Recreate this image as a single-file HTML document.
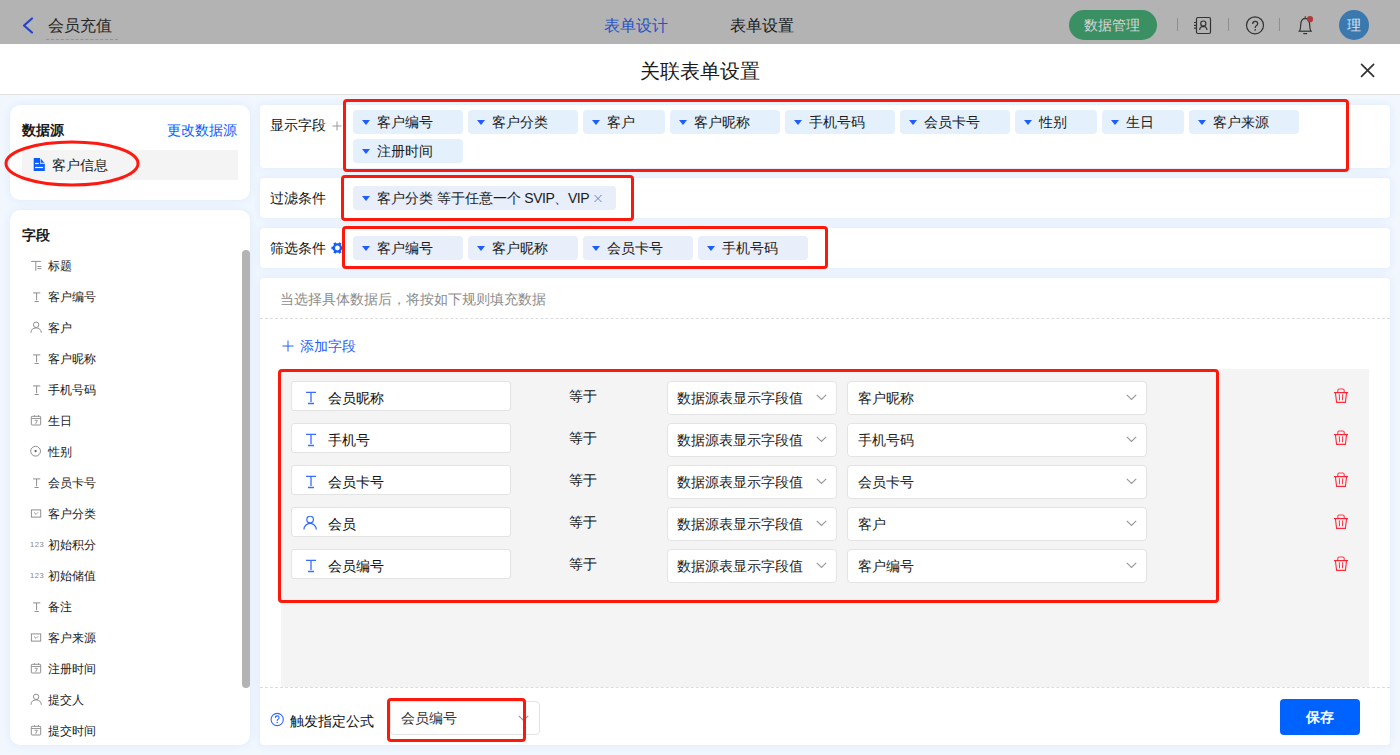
<!DOCTYPE html>
<html><head><meta charset="utf-8">
<style>
*{box-sizing:border-box;margin:0;padding:0}
html,body{width:1400px;height:755px;overflow:hidden}
body{position:relative;background:#f2f7fe;font-family:"Liberation Sans",sans-serif;color:#262626;font-size:14px}
.a{position:absolute}
.t14{position:absolute;font-size:14px;line-height:20px;white-space:nowrap}
.t12{position:absolute;font-size:12px;line-height:20px;white-space:nowrap}
.t16{position:absolute;font-size:16px;line-height:20px;white-space:nowrap}
.card{position:absolute;background:#fff;border-radius:4px;box-shadow:0 0 8px rgba(185,215,250,0.4)}
.redr{position:absolute;border:3px solid #fd180c;border-radius:4px}
.tag{position:absolute;height:24px;border-radius:4px;background:#e4f1fd}
.tag2{background:#e8eefa}
.tag .tri{position:absolute;left:9px;top:10px;width:0;height:0;border-left:4px solid transparent;border-right:4px solid transparent;border-top:5px solid #1d5cff}
.tag span{position:absolute;left:24px;top:1.5px;font-size:14px;line-height:20px;white-space:nowrap;color:#1a1a1a}
.inp{position:absolute;background:#fff;border:1px solid #e3e3e3;border-radius:3px}
.sel{position:absolute;background:#fff;border:1px solid #e3e3e3;border-radius:4px}
</style></head><body>
<!-- top header (dimmed) -->
<div class="a" style="left:0;top:0;width:1400px;height:44px;background:#b3b3b3"></div>
<svg class="a" style="left:20px;top:15px" width="16" height="21" viewBox="0 0 16 21"><polyline points="12,3.5 4,10.5 12,17.5" fill="none" stroke="#2145c6" stroke-width="2.2" stroke-linecap="round" stroke-linejoin="round"/></svg>
<div class="t16" style="left:48px;top:16px;color:#262626">会员充值</div>
<div class="a" style="left:46px;top:39px;width:72px;border-top:1px dashed #939393"></div>
<div class="t16" style="left:604px;top:16px;color:#2851c4">表单设计</div>
<div class="t16" style="left:730px;top:16px;color:#1a1a1a">表单设置</div>
<div class="a" style="left:1069px;top:10px;width:88px;height:30px;border-radius:15px;background:#3a8f63"></div>
<div class="t14" style="left:1084px;top:15px;color:#d6d6d6">数据管理</div>
<div class="a" style="left:1177px;top:18px;width:1px;height:13px;background:#8f8f8f"></div>
<div class="a" style="left:1228px;top:18px;width:1px;height:13px;background:#8f8f8f"></div>
<div class="a" style="left:1279px;top:18px;width:1px;height:13px;background:#8f8f8f"></div>
<svg class="a" style="left:1192px;top:15px" width="22" height="21" viewBox="0 0 22 21"><rect x="4.5" y="2.5" width="14" height="16" rx="1.5" fill="none" stroke="#333" stroke-width="1.2"/><circle cx="11.3" cy="8.6" r="2.6" fill="none" stroke="#333" stroke-width="1.2"/><path d="M7.6 15 Q7.9 11.6 11.3 11.4 Q14.7 11.6 15 15" fill="none" stroke="#333" stroke-width="1.2"/><path d="M2 7.5h3M2 10.4h3M2 13.1h3" stroke="#333" stroke-width="1.1"/></svg>
<svg class="a" style="left:1245px;top:16px" width="20" height="20" viewBox="0 0 20 20"><circle cx="10" cy="9.3" r="8.5" fill="none" stroke="#333" stroke-width="1.2"/><path d="M7.7 7.9 Q7.7 5.3 10.2 5.3 Q12.7 5.3 12.7 7.6 Q12.7 9.1 11 10 Q10.2 10.5 10.2 12" fill="none" stroke="#333" stroke-width="1.25"/><circle cx="10.2" cy="13.9" r="0.8" fill="#333"/></svg>
<svg class="a" style="left:1296px;top:15px" width="20" height="21" viewBox="0 0 20 21"><path d="M3.6 16 Q4.6 14.5 4.7 10 Q4.9 3.4 9.2 3.3 Q13.5 3.4 13.7 10 Q13.8 14.5 14.8 16" fill="none" stroke="#333" stroke-width="1.2" stroke-linejoin="round"/><path d="M2.5 16.2h13.4" stroke="#333" stroke-width="1.2"/><path d="M7.3 18.6h3.8" stroke="#333" stroke-width="1.2"/><path d="M9.2 1.2v1.6" stroke="#333" stroke-width="1.1"/><circle cx="14" cy="4.2" r="3.1" fill="#b23a3a"/></svg>
<div class="a" style="left:1339px;top:10px;width:30px;height:30px;border-radius:50%;background:#3a78ad"></div>
<div class="t14" style="left:1347px;top:15px;color:#dde6ef">理</div>

<!-- modal header -->
<div class="a" style="left:0;top:44px;width:1400px;height:50px;background:#fff"></div>
<div class="a" style="left:0;top:94px;width:1400px;height:1px;background:#dedede"></div>
<div class="a" style="left:640px;top:56px;font-size:20px;line-height:30px;color:#1a1a1a;white-space:nowrap">关联表单设置</div>
<svg class="a" style="left:1359px;top:62px" width="17" height="16" viewBox="0 0 17 16"><path d="M2.6 2.3 L14.6 14.3 M14.6 2.3 L2.6 14.3" stroke="#333" stroke-width="1.7" stroke-linecap="round"/></svg>

<!-- left panel card 1 -->
<div class="card" style="left:10px;top:105px;width:240px;height:95px;border-radius:10px"></div>
<div class="t14" style="left:22px;top:120px;font-weight:bold;color:#1a1a1a">数据源</div>
<div class="t14" style="left:167px;top:120px;color:#0a5cff">更改数据源</div>
<div class="a" style="left:22px;top:150px;width:216px;height:30px;background:#f4f4f4"></div>
<svg class="a" style="left:33px;top:157px" width="13" height="15" viewBox="0 0 13 15"><path d="M0.7 1.4 Q0.7 0.9 1.2 0.9 H7 V6.7 H11.8 V13.5 Q11.8 14 11.3 14 H1.2 Q0.7 14 0.7 13.5 Z" fill="#0a5cff"/><path d="M7.6 1.6 L11.4 5.7 H7.6 Z" fill="#0a5cff"/><rect x="2.1" y="5.9" width="3.6" height="1.2" fill="#fff"/><rect x="2.1" y="9.9" width="8.1" height="1.2" fill="#fff"/></svg>
<div class="t14" style="left:52px;top:155px;color:#1a1a1a">客户信息</div>
<svg class="a" style="left:3px;top:139px" width="138" height="49" viewBox="0 0 138 49"><ellipse cx="69" cy="24.5" rx="66" ry="21.5" fill="none" stroke="#fd1a10" stroke-width="3"/></svg>

<!-- left panel card 2 -->
<div class="card" style="left:10px;top:210px;width:240px;height:535px;border-radius:10px"></div>
<div class="t14" style="left:22px;top:225px;font-weight:bold;color:#1a1a1a">字段</div>
<div class="a" style="left:242px;top:250px;width:8px;height:438px;border-radius:4px;background:#b3b3b3"></div>
<div id="fields"></div>
<svg class="a" style="left:30px;top:259px" width="13" height="13" viewBox="0 0 13 13"><path d="M1.2 2.4h9.6M5.8 2.4v9.3M7.4 7.5h4M7.4 9.6h4" stroke="#8f8f8f" stroke-width="1" fill="none"/></svg>
<div class="t12" style="left:48px;top:256.0px;color:#1a1a1a">标题</div>
<svg class="a" style="left:30px;top:290px" width="13" height="13" viewBox="0 0 13 13"><path d="M3 2.9h7.3M6.6 2.9v7.3M4.5 11.5h4.2" stroke="#8f8f8f" stroke-width="1" fill="none"/></svg>
<div class="t12" style="left:48px;top:287.0px;color:#1a1a1a">客户编号</div>
<svg class="a" style="left:30px;top:321px" width="13" height="13" viewBox="0 0 13 13"><circle cx="6.1" cy="3.8" r="2.7" fill="none" stroke="#8f8f8f" stroke-width="1"/><path d="M0.9 11.8 Q1.2 7 6.1 6.9 Q11 7 11.3 11.8" fill="none" stroke="#8f8f8f" stroke-width="1"/></svg>
<div class="t12" style="left:48px;top:318.0px;color:#1a1a1a">客户</div>
<svg class="a" style="left:30px;top:352px" width="13" height="13" viewBox="0 0 13 13"><path d="M3 2.9h7.3M6.6 2.9v7.3M4.5 11.5h4.2" stroke="#8f8f8f" stroke-width="1" fill="none"/></svg>
<div class="t12" style="left:48px;top:349.0px;color:#1a1a1a">客户昵称</div>
<svg class="a" style="left:30px;top:383px" width="13" height="13" viewBox="0 0 13 13"><path d="M3 2.9h7.3M6.6 2.9v7.3M4.5 11.5h4.2" stroke="#8f8f8f" stroke-width="1" fill="none"/></svg>
<div class="t12" style="left:48px;top:380.0px;color:#1a1a1a">手机号码</div>
<svg class="a" style="left:30px;top:414px" width="13" height="13" viewBox="0 0 13 13"><rect x="1.3" y="2.3" width="9.4" height="8.7" rx="0.8" fill="none" stroke="#8f8f8f" stroke-width="1"/><path d="M1.3 4.5h9.4M4.5 1.2v1.6M8.5 1.2v1.6M4.6 6.3H7.4L5.7 9.8" stroke="#8f8f8f" stroke-width="0.9" fill="none"/></svg>
<div class="t12" style="left:48px;top:411.0px;color:#1a1a1a">生日</div>
<svg class="a" style="left:30px;top:445px" width="13" height="13" viewBox="0 0 13 13"><circle cx="5.6" cy="6.2" r="4.9" fill="none" stroke="#8f8f8f" stroke-width="1"/><circle cx="5.6" cy="6.1" r="1.1" fill="#555"/></svg>
<div class="t12" style="left:48px;top:442.0px;color:#1a1a1a">性别</div>
<svg class="a" style="left:30px;top:476px" width="13" height="13" viewBox="0 0 13 13"><path d="M3 2.9h7.3M6.6 2.9v7.3M4.5 11.5h4.2" stroke="#8f8f8f" stroke-width="1" fill="none"/></svg>
<div class="t12" style="left:48px;top:473.0px;color:#1a1a1a">会员卡号</div>
<svg class="a" style="left:30px;top:507px" width="13" height="13" viewBox="0 0 13 13"><rect x="1.4" y="2.9" width="9.3" height="7.2" fill="none" stroke="#8f8f8f" stroke-width="1"/><path d="M3.9 5.3 L6 7.4 L8.1 5.3" stroke="#8f8f8f" stroke-width="0.9" fill="none"/></svg>
<div class="t12" style="left:48px;top:504.0px;color:#1a1a1a">客户分类</div>
<svg class="a" style="left:30px;top:538px" width="14" height="13" viewBox="0 0 14 13"><text x="0" y="8.9" font-family="Liberation Sans" font-size="7.6" letter-spacing="0.5" fill="#888">123</text></svg>
<div class="t12" style="left:48px;top:535.0px;color:#1a1a1a">初始积分</div>
<svg class="a" style="left:30px;top:569px" width="14" height="13" viewBox="0 0 14 13"><text x="0" y="8.9" font-family="Liberation Sans" font-size="7.6" letter-spacing="0.5" fill="#888">123</text></svg>
<div class="t12" style="left:48px;top:566.0px;color:#1a1a1a">初始储值</div>
<svg class="a" style="left:30px;top:600px" width="13" height="13" viewBox="0 0 13 13"><path d="M3 2.9h7.3M6.6 2.9v7.3M4.5 11.5h4.2" stroke="#8f8f8f" stroke-width="1" fill="none"/></svg>
<div class="t12" style="left:48px;top:597.0px;color:#1a1a1a">备注</div>
<svg class="a" style="left:30px;top:631px" width="13" height="13" viewBox="0 0 13 13"><rect x="1.4" y="2.9" width="9.3" height="7.2" fill="none" stroke="#8f8f8f" stroke-width="1"/><path d="M3.9 5.3 L6 7.4 L8.1 5.3" stroke="#8f8f8f" stroke-width="0.9" fill="none"/></svg>
<div class="t12" style="left:48px;top:628.0px;color:#1a1a1a">客户来源</div>
<svg class="a" style="left:30px;top:662px" width="13" height="13" viewBox="0 0 13 13"><rect x="1.3" y="2.3" width="9.4" height="8.7" rx="0.8" fill="none" stroke="#8f8f8f" stroke-width="1"/><path d="M1.3 4.5h9.4M4.5 1.2v1.6M8.5 1.2v1.6M4.6 6.3H7.4L5.7 9.8" stroke="#8f8f8f" stroke-width="0.9" fill="none"/></svg>
<div class="t12" style="left:48px;top:659.0px;color:#1a1a1a">注册时间</div>
<svg class="a" style="left:30px;top:693px" width="13" height="13" viewBox="0 0 13 13"><circle cx="6.1" cy="3.8" r="2.7" fill="none" stroke="#8f8f8f" stroke-width="1"/><path d="M0.9 11.8 Q1.2 7 6.1 6.9 Q11 7 11.3 11.8" fill="none" stroke="#8f8f8f" stroke-width="1"/></svg>
<div class="t12" style="left:48px;top:690.0px;color:#1a1a1a">提交人</div>
<svg class="a" style="left:30px;top:724px" width="13" height="13" viewBox="0 0 13 13"><rect x="1.3" y="2.3" width="9.4" height="8.7" rx="0.8" fill="none" stroke="#8f8f8f" stroke-width="1"/><path d="M1.3 4.5h9.4M4.5 1.2v1.6M8.5 1.2v1.6M4.6 6.3H7.4L5.7 9.8" stroke="#8f8f8f" stroke-width="0.9" fill="none"/></svg>
<div class="t12" style="left:48px;top:721.0px;color:#1a1a1a">提交时间</div>
<div class="card" style="left:260px;top:105px;width:1130px;height:63px"></div>
<div class="t14" style="left:270px;top:115px;color:#111">显示字段</div>
<svg class="a" style="left:332px;top:121px" width="10" height="10" viewBox="0 0 10 10"><path d="M5 0.5v9M0.5 5h9" stroke="#999" stroke-width="1"/></svg>
<div class="tag" style="left:353px;top:110px;width:110px"><i class="tri"></i><span>客户编号</span></div>
<div class="tag" style="left:468px;top:110px;width:110px"><i class="tri"></i><span>客户分类</span></div>
<div class="tag" style="left:583px;top:110px;width:82px"><i class="tri"></i><span>客户</span></div>
<div class="tag" style="left:670px;top:110px;width:110px"><i class="tri"></i><span>客户昵称</span></div>
<div class="tag" style="left:785px;top:110px;width:110px"><i class="tri"></i><span>手机号码</span></div>
<div class="tag" style="left:900px;top:110px;width:110px"><i class="tri"></i><span>会员卡号</span></div>
<div class="tag" style="left:1015px;top:110px;width:82px"><i class="tri"></i><span>性别</span></div>
<div class="tag" style="left:1102px;top:110px;width:82px"><i class="tri"></i><span>生日</span></div>
<div class="tag" style="left:1189px;top:110px;width:110px"><i class="tri"></i><span>客户来源</span></div>
<div class="tag" style="left:353px;top:139px;width:110px"><i class="tri"></i><span>注册时间</span></div>
<div class="redr" style="left:343px;top:99px;width:1006px;height:73px"></div>
<div class="card" style="left:260px;top:178px;width:1130px;height:40px"></div>
<div class="t14" style="left:270px;top:188px;color:#111">过滤条件</div>
<div class="tag tag2" style="left:353px;top:186px;width:263px"><i class="tri"></i><span>客户分类 等于任意一个<b style="font-weight:normal;letter-spacing:-0.45px"> SVIP、VIP</b></span></div>
<svg class="a" style="left:593px;top:194px" width="10" height="9" viewBox="0 0 10 9"><path d="M1.5 1l7 7M8.5 1l-7 7" stroke="#6a82c8" stroke-width="1"/></svg>
<div class="redr" style="left:341px;top:175px;width:293px;height:46px"></div>
<div class="card" style="left:260px;top:228px;width:1130px;height:40px"></div>
<div class="t14" style="left:270px;top:238px;color:#111">筛选条件</div>
<svg class="a" style="left:331px;top:242px" width="13" height="13" viewBox="0 0 13 13"><g transform="translate(6.4,6)" fill="#1260ff"><circle r="4.7"/><rect x="-1.3" y="-6" width="2.6" height="3" transform="rotate(30)"/><rect x="-1.3" y="-6" width="2.6" height="3" transform="rotate(90)"/><rect x="-1.3" y="-6" width="2.6" height="3" transform="rotate(150)"/><rect x="-1.3" y="-6" width="2.6" height="3" transform="rotate(210)"/><rect x="-1.3" y="-6" width="2.6" height="3" transform="rotate(270)"/><rect x="-1.3" y="-6" width="2.6" height="3" transform="rotate(330)"/><circle r="2.4" fill="#fff"/></g></svg>
<div class="tag tag2" style="left:353px;top:236px;width:110px"><i class="tri"></i><span>客户编号</span></div>
<div class="tag tag2" style="left:468px;top:236px;width:110px"><i class="tri"></i><span>客户昵称</span></div>
<div class="tag tag2" style="left:583px;top:236px;width:110px"><i class="tri"></i><span>会员卡号</span></div>
<div class="tag tag2" style="left:698px;top:236px;width:110px"><i class="tri"></i><span>手机号码</span></div>
<div class="redr" style="left:342px;top:226px;width:486px;height:43px"></div>
<div class="card" style="left:260px;top:278px;width:1130px;height:467px"></div>
<div class="t14" style="left:280px;top:289px;color:#8c8c8c">当选择具体数据后，将按如下规则填充数据</div>
<div class="a" style="left:260px;top:318px;width:1130px;border-top:1px dashed #dcdcdc"></div>
<svg class="a" style="left:282px;top:340px" width="12" height="12" viewBox="0 0 12 12"><path d="M6 0.5v11M0.5 6h11" stroke="#1f5fff" stroke-width="1"/></svg>
<div class="t14" style="left:300px;top:336px;color:#1f5fff">添加字段</div>
<div class="a" style="left:281px;top:369px;width:1088px;height:318px;background:#f4f4f4"></div>
<div class="inp" style="left:291px;top:381px;width:220px;height:30px"></div>
<svg class="a" style="left:305px;top:390px" width="12" height="15" viewBox="0 0 12 15"><path d="M1 2.4h10M6 2.4v9.5M3 13.5h6" stroke="#3a6cff" stroke-width="1.3" fill="none"/></svg>
<div class="t14" style="left:328px;top:387.5px;color:#111">会员昵称</div>
<div class="t14" style="left:569px;top:385.5px;color:#111">等于</div>
<div class="sel" style="left:667px;top:381px;width:170px;height:34px"></div>
<div class="t14" style="left:677px;top:387.5px;color:#222">数据源表显示字段值</div>
<svg class="a" style="left:816px;top:394px" width="11" height="7" viewBox="0 0 11 7"><path d="M0.8 0.8l4.7 4.7l4.7-4.7" stroke="#999" stroke-width="1.2" fill="none"/></svg>
<div class="sel" style="left:847px;top:381px;width:300px;height:34px"></div>
<div class="t14" style="left:858px;top:387.5px;color:#222">客户昵称</div>
<svg class="a" style="left:1126px;top:394px" width="11" height="7" viewBox="0 0 11 7"><path d="M0.8 0.8l4.7 4.7l4.7-4.7" stroke="#999" stroke-width="1.2" fill="none"/></svg>
<svg class="a" style="left:1333px;top:388px" width="16" height="16" viewBox="0 0 16 16"><path d="M4.8 4.5 V2.4 Q4.8 1 6.2 1 H9.8 Q11.2 1 11.2 2.4 V4.5" fill="none" stroke="#ff3a4a" stroke-width="1.1"/><path d="M1 4.6h14" stroke="#ff1f2f" stroke-width="1.2"/><path d="M2.4 4.6 L3.6 14.4 H12.4 L13.6 4.6" fill="none" stroke="#ff2a3a" stroke-width="1.1"/><path d="M6.3 6.3 L6.6 12.3 M9.7 6.3 L9.4 12.3" stroke="#ff3048" stroke-width="1"/></svg>
<div class="inp" style="left:291px;top:423px;width:220px;height:30px"></div>
<svg class="a" style="left:305px;top:432px" width="12" height="15" viewBox="0 0 12 15"><path d="M1 2.4h10M6 2.4v9.5M3 13.5h6" stroke="#3a6cff" stroke-width="1.3" fill="none"/></svg>
<div class="t14" style="left:328px;top:429.5px;color:#111">手机号</div>
<div class="t14" style="left:569px;top:427.5px;color:#111">等于</div>
<div class="sel" style="left:667px;top:423px;width:170px;height:34px"></div>
<div class="t14" style="left:677px;top:429.5px;color:#222">数据源表显示字段值</div>
<svg class="a" style="left:816px;top:436px" width="11" height="7" viewBox="0 0 11 7"><path d="M0.8 0.8l4.7 4.7l4.7-4.7" stroke="#999" stroke-width="1.2" fill="none"/></svg>
<div class="sel" style="left:847px;top:423px;width:300px;height:34px"></div>
<div class="t14" style="left:858px;top:429.5px;color:#222">手机号码</div>
<svg class="a" style="left:1126px;top:436px" width="11" height="7" viewBox="0 0 11 7"><path d="M0.8 0.8l4.7 4.7l4.7-4.7" stroke="#999" stroke-width="1.2" fill="none"/></svg>
<svg class="a" style="left:1333px;top:430px" width="16" height="16" viewBox="0 0 16 16"><path d="M4.8 4.5 V2.4 Q4.8 1 6.2 1 H9.8 Q11.2 1 11.2 2.4 V4.5" fill="none" stroke="#ff3a4a" stroke-width="1.1"/><path d="M1 4.6h14" stroke="#ff1f2f" stroke-width="1.2"/><path d="M2.4 4.6 L3.6 14.4 H12.4 L13.6 4.6" fill="none" stroke="#ff2a3a" stroke-width="1.1"/><path d="M6.3 6.3 L6.6 12.3 M9.7 6.3 L9.4 12.3" stroke="#ff3048" stroke-width="1"/></svg>
<div class="inp" style="left:291px;top:465px;width:220px;height:30px"></div>
<svg class="a" style="left:305px;top:474px" width="12" height="15" viewBox="0 0 12 15"><path d="M1 2.4h10M6 2.4v9.5M3 13.5h6" stroke="#3a6cff" stroke-width="1.3" fill="none"/></svg>
<div class="t14" style="left:328px;top:471.5px;color:#111">会员卡号</div>
<div class="t14" style="left:569px;top:469.5px;color:#111">等于</div>
<div class="sel" style="left:667px;top:465px;width:170px;height:34px"></div>
<div class="t14" style="left:677px;top:471.5px;color:#222">数据源表显示字段值</div>
<svg class="a" style="left:816px;top:478px" width="11" height="7" viewBox="0 0 11 7"><path d="M0.8 0.8l4.7 4.7l4.7-4.7" stroke="#999" stroke-width="1.2" fill="none"/></svg>
<div class="sel" style="left:847px;top:465px;width:300px;height:34px"></div>
<div class="t14" style="left:858px;top:471.5px;color:#222">会员卡号</div>
<svg class="a" style="left:1126px;top:478px" width="11" height="7" viewBox="0 0 11 7"><path d="M0.8 0.8l4.7 4.7l4.7-4.7" stroke="#999" stroke-width="1.2" fill="none"/></svg>
<svg class="a" style="left:1333px;top:472px" width="16" height="16" viewBox="0 0 16 16"><path d="M4.8 4.5 V2.4 Q4.8 1 6.2 1 H9.8 Q11.2 1 11.2 2.4 V4.5" fill="none" stroke="#ff3a4a" stroke-width="1.1"/><path d="M1 4.6h14" stroke="#ff1f2f" stroke-width="1.2"/><path d="M2.4 4.6 L3.6 14.4 H12.4 L13.6 4.6" fill="none" stroke="#ff2a3a" stroke-width="1.1"/><path d="M6.3 6.3 L6.6 12.3 M9.7 6.3 L9.4 12.3" stroke="#ff3048" stroke-width="1"/></svg>
<div class="inp" style="left:291px;top:507px;width:220px;height:30px"></div>
<svg class="a" style="left:303px;top:516px" width="15" height="15" viewBox="0 0 15 15"><circle cx="7.1" cy="3.5" r="3.3" fill="none" stroke="#2f6bff" stroke-width="1.2"/><path d="M0.9 13.6 A6.2 6.2 0 0 1 13.3 13.6" fill="none" stroke="#2f6bff" stroke-width="1.2"/></svg>
<div class="t14" style="left:328px;top:513.5px;color:#111">会员</div>
<div class="t14" style="left:569px;top:511.5px;color:#111">等于</div>
<div class="sel" style="left:667px;top:507px;width:170px;height:34px"></div>
<div class="t14" style="left:677px;top:513.5px;color:#222">数据源表显示字段值</div>
<svg class="a" style="left:816px;top:520px" width="11" height="7" viewBox="0 0 11 7"><path d="M0.8 0.8l4.7 4.7l4.7-4.7" stroke="#999" stroke-width="1.2" fill="none"/></svg>
<div class="sel" style="left:847px;top:507px;width:300px;height:34px"></div>
<div class="t14" style="left:858px;top:513.5px;color:#222">客户</div>
<svg class="a" style="left:1126px;top:520px" width="11" height="7" viewBox="0 0 11 7"><path d="M0.8 0.8l4.7 4.7l4.7-4.7" stroke="#999" stroke-width="1.2" fill="none"/></svg>
<svg class="a" style="left:1333px;top:514px" width="16" height="16" viewBox="0 0 16 16"><path d="M4.8 4.5 V2.4 Q4.8 1 6.2 1 H9.8 Q11.2 1 11.2 2.4 V4.5" fill="none" stroke="#ff3a4a" stroke-width="1.1"/><path d="M1 4.6h14" stroke="#ff1f2f" stroke-width="1.2"/><path d="M2.4 4.6 L3.6 14.4 H12.4 L13.6 4.6" fill="none" stroke="#ff2a3a" stroke-width="1.1"/><path d="M6.3 6.3 L6.6 12.3 M9.7 6.3 L9.4 12.3" stroke="#ff3048" stroke-width="1"/></svg>
<div class="inp" style="left:291px;top:549px;width:220px;height:30px"></div>
<svg class="a" style="left:305px;top:558px" width="12" height="15" viewBox="0 0 12 15"><path d="M1 2.4h10M6 2.4v9.5M3 13.5h6" stroke="#3a6cff" stroke-width="1.3" fill="none"/></svg>
<div class="t14" style="left:328px;top:555.5px;color:#111">会员编号</div>
<div class="t14" style="left:569px;top:553.5px;color:#111">等于</div>
<div class="sel" style="left:667px;top:549px;width:170px;height:34px"></div>
<div class="t14" style="left:677px;top:555.5px;color:#222">数据源表显示字段值</div>
<svg class="a" style="left:816px;top:562px" width="11" height="7" viewBox="0 0 11 7"><path d="M0.8 0.8l4.7 4.7l4.7-4.7" stroke="#999" stroke-width="1.2" fill="none"/></svg>
<div class="sel" style="left:847px;top:549px;width:300px;height:34px"></div>
<div class="t14" style="left:858px;top:555.5px;color:#222">客户编号</div>
<svg class="a" style="left:1126px;top:562px" width="11" height="7" viewBox="0 0 11 7"><path d="M0.8 0.8l4.7 4.7l4.7-4.7" stroke="#999" stroke-width="1.2" fill="none"/></svg>
<svg class="a" style="left:1333px;top:556px" width="16" height="16" viewBox="0 0 16 16"><path d="M4.8 4.5 V2.4 Q4.8 1 6.2 1 H9.8 Q11.2 1 11.2 2.4 V4.5" fill="none" stroke="#ff3a4a" stroke-width="1.1"/><path d="M1 4.6h14" stroke="#ff1f2f" stroke-width="1.2"/><path d="M2.4 4.6 L3.6 14.4 H12.4 L13.6 4.6" fill="none" stroke="#ff2a3a" stroke-width="1.1"/><path d="M6.3 6.3 L6.6 12.3 M9.7 6.3 L9.4 12.3" stroke="#ff3048" stroke-width="1"/></svg>
<div class="redr" style="left:278px;top:369px;width:941px;height:234px"></div>
<div class="a" style="left:260px;top:687px;width:1130px;border-top:1px dashed #dcdcdc"></div>
<svg class="a" style="left:270px;top:712px" width="15" height="15" viewBox="0 0 15 15"><circle cx="7.2" cy="7.5" r="6.1" fill="none" stroke="#2f6bff" stroke-width="1.1"/><path d="M5.3 6 Q5.3 3.9 7.2 3.9 Q9.1 3.9 9.1 5.7 Q9.1 6.7 7.8 7.4 Q7.2 7.8 7.2 8.9" fill="none" stroke="#2f6bff" stroke-width="1.1"/><circle cx="7.2" cy="10.6" r="0.75" fill="#2f6bff"/></svg>
<div class="t14" style="left:290px;top:710.5px;color:#111">触发指定公式</div>
<div class="sel" style="left:390px;top:701px;width:150px;height:34px"></div>
<div class="t14" style="left:401px;top:708px;color:#333">会员编号</div>
<svg class="a" style="left:518px;top:715px" width="11" height="7" viewBox="0 0 11 7"><path d="M0.8 0.8l4.7 4.7l4.7-4.7" stroke="#999" stroke-width="1.2" fill="none"/></svg>
<div class="redr" style="left:387px;top:698px;width:139px;height:44px"></div>
<div class="a" style="left:1280px;top:699px;width:80px;height:36px;border-radius:4px;background:#0062ff"></div>
<div class="t14" style="left:1306px;top:707px;color:#fff;font-weight:bold">保存</div>
</body></html>
